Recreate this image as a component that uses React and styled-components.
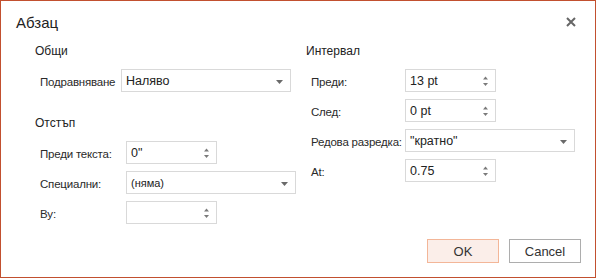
import React from 'react'
import styled, { createGlobalStyle } from 'styled-components'

const Global = createGlobalStyle`
    html, body { margin:0; padding:0; background:#fff; }
    body { font-family:"Liberation Sans", Arial, sans-serif; }
`

const SpinArrows = () => (
    <svg width="7" height="14" viewBox="0 0 7 14">
        <path d="M1 5.5 L3.5 2.5 L6 5.5 Z" fill="#7a7a7a" />
        <path d="M1 9 L3.5 12 L6 9 Z" fill="#7a7a7a" />
    </svg>
)

const DropArrow = () => (
    <svg width="7" height="4" viewBox="0 0 7 4">
        <path d="M0 0 L7 0 L3.5 4 Z" fill="#6a6a6a" />
    </svg>
)

const Field = ({ label, width, value, kind = 'spin', boxWidth = 91, small }) => (
    <Row>
        <Label $w={width}>{label}</Label>
        <Box $w={boxWidth}>
            <Value $small={small}>{value}</Value>
            <Arrow $kind={kind}>{kind === 'spin' ? <SpinArrows /> : <DropArrow />}</Arrow>
        </Box>
    </Row>
)

const App = () => {
    return (
        <>
            <Global />
            <Dialog>
                <Header>
                    <Title>Абзац</Title>
                    <Close>
                        <svg width="10" height="10" viewBox="0 0 10 10">
                            <path d="M1 1 L9 9 M9 1 L1 9" stroke="#666" strokeWidth="2" />
                        </svg>
                    </Close>
                </Header>
                <Body>
                    <Column>
                        <Section>
                            <Heading>Общи</Heading>
                            <Field label="Подравняване" width={81} value="Наляво" kind="drop" boxWidth={170} />
                        </Section>
                        <Section $gap>
                            <Heading>Отстъп</Heading>
                            <Fields>
                                <Field label="Преди текста:" width={86} value={'0"'} />
                                <Field label="Специални:" width={86} value="(няма)" kind="drop" boxWidth={170} small />
                                <Field label="Ву:" width={86} value="" />
                            </Fields>
                        </Section>
                    </Column>
                    <Column>
                        <Section>
                            <Heading>Интервал</Heading>
                            <Fields>
                                <Field label="Преди:" width={94} value="13 pt" />
                                <Field label="След:" width={94} value="0 pt" />
                                <Field label="Редова разредка:" width={94} value={'"кратно"'} kind="drop" boxWidth={170} />
                                <Field label="At:" width={94} value="0.75" />
                            </Fields>
                        </Section>
                    </Column>
                </Body>
                <Footer>
                    <Button $primary>OK</Button>
                    <Button>Cancel</Button>
                </Footer>
            </Dialog>
        </>
    )
}

export default App

const Dialog = styled.div`
    box-sizing:border-box;
    width:596px;
    height:278px;
    border:1px solid #c2502f;
    background:#fff;
    display:flex;
    flex-direction:column;
    color:#252525;
`

const Header = styled.div`
    display:flex;
    align-items:center;
    justify-content:space-between;
    padding:12px 19px 0 15px;
    height:20px;
`

const Title = styled.div`
    font-size:15px;
    line-height:20px;
    color:#222;
`

const Close = styled.div`
    width:10px;
    height:10px;
    display:flex;
    margin-top:-3px;
`

const Body = styled.div`
    display:grid;
    grid-template-columns:271px 1fr;
    padding:11px 0 0 34px;
`

const Column = styled.div`
    display:flex;
    flex-direction:column;
`

const Section = styled.div`
    display:flex;
    flex-direction:column;
    margin-top:${p => (p.$gap ? '24px' : '0')};
`

const Heading = styled.div`
    font-size:12px;
    line-height:15px;
    margin-bottom:10px;
    color:#222;
`

const Fields = styled.div`
    display:flex;
    flex-direction:column;
    gap:7px;
`

const Row = styled.div`
    display:flex;
    align-items:center;
    padding-left:5px;
    height:23px;
`

const Label = styled.div`
    width:${p => p.$w}px;
    font-size:11.5px;
    letter-spacing:-0.2px;
    color:#2a2a2a;
    white-space:nowrap;
    margin-top:2px;
`

const Box = styled.div`
    box-sizing:border-box;
    width:${p => p.$w}px;
    height:23px;
    border:1px solid #d9d9d9;
    display:flex;
    align-items:center;
    padding:0 0 0 4px;
    background:#fff;
`

const Value = styled.div`
    flex:1;
    font-size:${p => (p.$small ? '11px' : '12.5px')};
    color:#222;
    white-space:nowrap;
`

const Arrow = styled.div`
    width:${p => (p.$kind === 'spin' ? '20px' : '22px')};
    display:flex;
    justify-content:center;
    align-items:center;
    margin-top:${p => (p.$kind === 'spin' ? '0' : '2px')};
`

const Footer = styled.div`
    margin-top:auto;
    display:flex;
    justify-content:flex-end;
    gap:10px;
    padding:0 14px 14px 0;
`

const Button = styled.div`
    box-sizing:border-box;
    width:72px;
    height:24px;
    display:flex;
    align-items:center;
    justify-content:center;
    font-size:13px;
    color:#333;
    background:${p => (p.$primary ? '#fbeee9' : '#fff')};
    border:1px solid ${p => (p.$primary ? '#f3b698' : '#adadad')};
`
